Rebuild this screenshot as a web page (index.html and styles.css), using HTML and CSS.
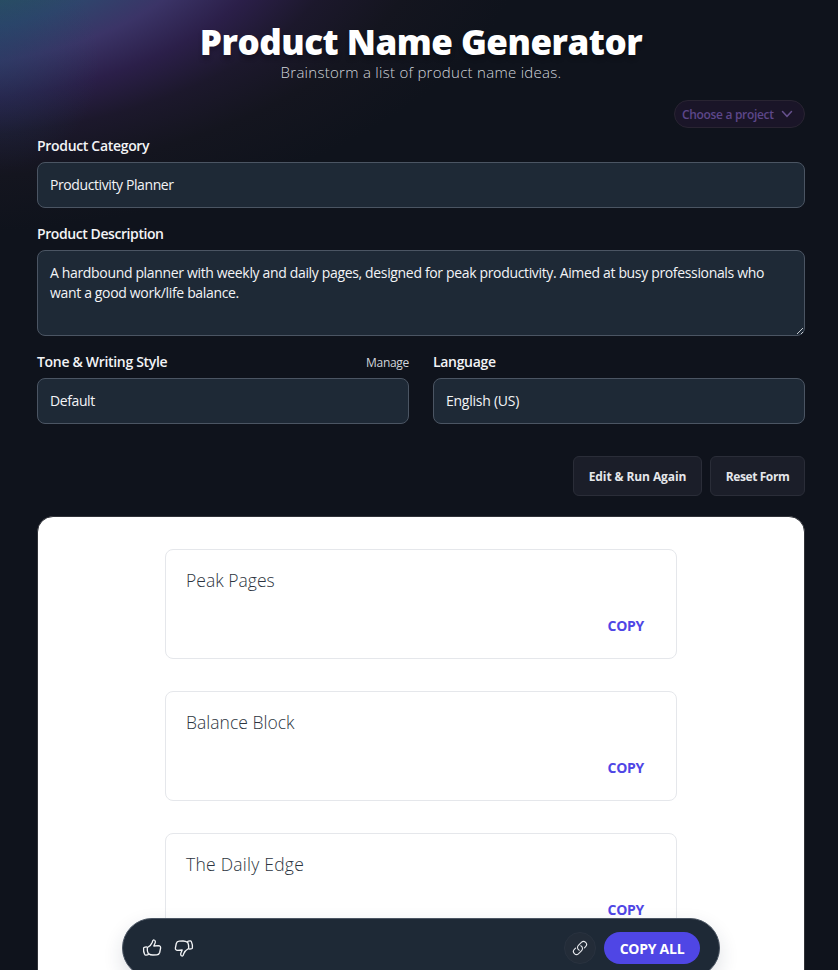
FILE: index.html
```html
<!DOCTYPE html>
<html lang="en">
<head>
<meta charset="utf-8">
<title>Product Name Generator</title>
<link rel="stylesheet" href="styles.css">
</head>
<body>
<main class="page">
  <header class="hero">
    <h1><span>Product Name Generator</span></h1>
    <p><span>Brainstorm a list of product name ideas.</span></p>
  </header>
  <div class="project-row">
    <button class="project"><span>Choose a project</span>
      <svg width="12" height="12" viewBox="0 0 12 12"><path d="M1.500 3.500 6 8.300l4.500-4.800"/></svg>
    </button>
  </div>
  <form class="form">
    <div class="field">
      <div class="label-row"><label>Product Category</label></div>
      <div class="control"><span>Productivity Planner</span></div>
    </div>
    <div class="field">
      <div class="label-row"><label class="tight">Product Description</label></div>
      <div class="control area"><span>A hardbound planner with weekly and daily pages, designed for peak productivity. Aimed at busy professionals who</span><br><span>want a good work/life balance.</span>
        <svg class="grip" width="8" height="8" viewBox="0 0 8 8"><path d="M1 7 7 1M5 7l2-2"/></svg>
      </div>
    </div>
    <div class="columns">
      <div class="field">
        <div class="label-row"><label>Tone &amp; Writing Style</label><a class="manage">Manage</a></div>
        <div class="control"><span>Default</span></div>
      </div>
      <div class="field">
        <div class="label-row"><label>Language</label></div>
        <div class="control language"><span>English (US)</span></div>
      </div>
    </div>
  </form>
  <div class="actions">
    <button class="btn btn-edit" type="button"><span>Edit &amp; Run Again</span></button>
    <button class="btn btn-reset" type="button"><span>Reset Form</span></button>
  </div>
  <section class="results">
    <article class="card"><h2><span>Peak Pages</span></h2><a class="copy">COPY</a></article>
    <article class="card"><h2><span>Balance Block</span></h2><a class="copy">COPY</a></article>
    <article class="card"><h2 class="wide"><span>The Daily Edge</span></h2><a class="copy">COPY</a></article>
  </section>
</main>
<div class="toolbar">
  <svg class="thumb" width="20" height="20" viewBox="0 0 20 20"><path d="M5.800 9.200C8 8 9.400 6.600 10.300 4.200c.4-1.700 1-2.500 1.900-2.200 1.300.4 1.400 2 .7 3.600L11.800 8l4.700-.3c1.500 0 2.300 1 2.100 2.300l-.9 4.500c-.4 1.600-1.400 2.300-3 2.400l-3.800.1c-1.700 0-3.200-.5-4.600-1.400M2.200 9.300l2-.4c.8-.1 1.200.3 1.100 1.100-.2 1.900.1 3.700.9 5.400.4.900.1 1.400-.7 1.500l-1.500.2c-.7.1-1.100-.2-1.400-.8-.9-2-1.200-4-1-6.100 0-.5.200-.8.600-.9Z"/></svg>
  <svg class="thumb down" width="20" height="20" viewBox="0 0 20 20"><path d="M5.800 9.200C8 8 9.400 6.600 10.300 4.200c.4-1.700 1-2.500 1.900-2.200 1.300.4 1.400 2 .7 3.600L11.800 8l4.700-.3c1.500 0 2.300 1 2.100 2.300l-.9 4.500c-.4 1.600-1.400 2.300-3 2.400l-3.800.1c-1.700 0-3.200-.5-4.600-1.400M2.200 9.300l2-.4c.8-.1 1.200.3 1.100 1.100-.2 1.900.1 3.700.9 5.400.4.900.1 1.400-.7 1.500l-1.500.2c-.7.1-1.100-.2-1.400-.8-.9-2-1.200-4-1-6.100 0-.5.200-.8.600-.9Z"/></svg>
  <span class="link"><svg width="16" height="16" viewBox="0 0 24 24"><path d="M13.190 8.688a4.500 4.500 0 0 1 1.242 7.244l-4.500 4.500a4.500 4.500 0 0 1-6.364-6.364l1.757-1.757m13.350-.622 1.757-1.757a4.500 4.500 0 0 0-6.364-6.364l-4.500 4.500a4.500 4.500 0 0 0 1.242 7.244"/></svg></span>
  <button class="copy-all"><span>COPY ALL</span></button>
</div>
</body>
</html>
```
FILE: styles.css
```css
* { box-sizing: border-box; }
body {
  margin: 0;
  height: 970px;
  overflow: hidden;
  position: relative;
  background:
    radial-gradient(ellipse 100px 110px at 0 60px, rgba(25,70,98,.35), rgba(25,60,98,0)),
    radial-gradient(ellipse 520px 275px at -80px -90px, #2a5062 34%, #2f456c 45%, #3b3467 57%, #2b1f49 70%, #1c182c 83%, #14151f 98%, rgba(15,19,28,0) 118%),
    #0f131c;
  color: #f3f4f6;
  font: 14px/20px "Open Sans", "Noto Sans", sans-serif;
}
span, label, a { white-space: nowrap; }
button { font-family: inherit; margin: 0; }
.page { width: 768px; margin-left: 37px; }
.hero { height: 100px; padding-top: 22px; text-align: center; }
h1 { margin: 0; font-size: 35px; line-height: 40px; font-weight: 800; letter-spacing: -.5px; color: #fff; text-shadow: 0 4px 4px rgba(0,0,0,.25); }
.hero p { margin: 0; font-size: 15px; line-height: 21px; font-weight: 300; letter-spacing: .28px; color: #d1d5db; }
.project-row { display: flex; justify-content: flex-end; }
.project {
  display: flex; align-items: center; justify-content: space-between;
  width: 131px; height: 28px; padding: 0 11px 0 7px;
  border: 1px solid #292432; border-radius: 14px; background: #1a1528;
  color: #5d478a; font-size: 12px; font-weight: 600; letter-spacing: -.32px;
}
.project svg { fill: none; stroke: #66518d; stroke-width: 1.500; stroke-linecap: round; }
.form { padding-top: 8px; }
.field { margin-bottom: 16px; }
.label-row { height: 26px; display: flex; justify-content: space-between; line-height: 20px; }
.label-row label { font-weight: 600; letter-spacing: -.32px; }
.label-row .tight { letter-spacing: -.42px; }
.manage { font-size: 12px; line-height: 22px; letter-spacing: -.3px; color: #d1d5db; }
.control {
  position: relative; height: 46px; padding: 12px; border: 1px solid #4b5563;
  border-radius: 8px; background: #1e2936; letter-spacing: -.4px;
}
.language { letter-spacing: -.25px; }
.area { height: 86px; letter-spacing: -.342px; }
.grip { position: absolute; right: 0; bottom: 0; fill: none; stroke: #c5c9cf; stroke-width: 1; }
.columns { display: grid; grid-template-columns: 1fr 1fr; gap: 24px; }
.actions { display: flex; justify-content: flex-end; gap: 8px; margin-top: 16px; }
.btn {
  height: 40px; padding: 0; border: 1px solid #2a2d38; border-radius: 6px;
  background: #1b1e29; color: #e5e7eb; font-size: 12px; font-weight: 700; letter-spacing: -.1px;
}
.btn-edit { width: 129px; }
.btn-reset { width: 95px; letter-spacing: -.4px; }
.results {
  height: 500px; margin-top: 20px; padding: 32px 127px; border: 1px solid #303238;
  border-radius: 16px; background: #fff; display: flex; flex-direction: column; gap: 32px;
}
.card {
  flex: 0 0 110px; border: 1px solid #e5e7eb; border-radius: 8px;
  padding: 16px 32px 22px 20px; display: flex; flex-direction: column; justify-content: space-between;
}
.card h2 { margin: 0; font-size: 17.500px; line-height: 28px; font-weight: 350; letter-spacing: .02px; color: #2c3440; }
.card .wide { letter-spacing: .25px; }
.copy { align-self: flex-end; font-weight: 700; letter-spacing: -.3px; color: #4f46e5; }
.toolbar {
  position: absolute; left: 122px; top: 918px; width: 598px; height: 60px;
  padding: 0 19px; border: 1px solid #4b5563; border-radius: 30px; background: #1e2936;
  display: flex; align-items: center; box-shadow: 0 8px 20px rgba(30,41,70,.14);
}
.thumb { fill: none; stroke: #f3f4f6; stroke-width: 1.300; stroke-linejoin: round; stroke-linecap: round; margin-right: 12px; }
.down { transform: rotate(180deg); }
.link {
  width: 32px; height: 32px; margin-left: auto; margin-right: 8px; border-radius: 50%;
  background: #232c38; border: 1px solid #29323f; display: grid; place-items: center;
}
.link svg { fill: none; stroke: #e5e7eb; stroke-width: 1.700; stroke-linecap: round; }
.copy-all { width: 96px; height: 32px; padding: 0; border: 0; border-radius: 16px; background: #4f46e5; color: #fff; font-size: 14px; font-weight: 700; letter-spacing: -.25px; }
```
